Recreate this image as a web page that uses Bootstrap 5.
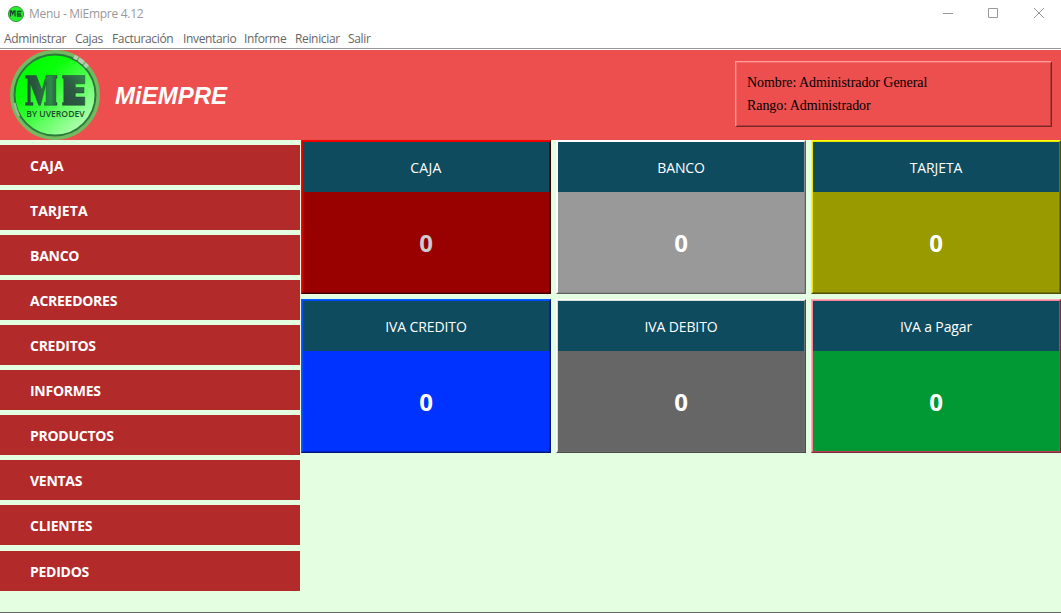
<!DOCTYPE html>
<html lang="es">
<head>
<meta charset="utf-8">
<title>Menu - MiEmpre 4.12</title>
<link href="https://cdn.jsdelivr.net/npm/bootstrap@5.3.0/dist/css/bootstrap.min.css" rel="stylesheet">
<style>
body{width:1061px;height:613px;overflow:hidden;background:#e3fee0;font-family:"Open Sans","Noto Sans",sans-serif}
.titlebar{height:28px;padding-left:8px;background:#fff;color:#999;font-size:12px}
.titlebar .caption{margin-left:5px;letter-spacing:-.29px}
.wmenu{height:20px;padding-left:4px;background:#fff;color:#666;font-size:12px;line-height:21px;white-space:nowrap}
.wmenu span{letter-spacing:-.35px}
.rule{height:2px;background:#fff;border-top:1px solid #999}
.hero{height:90px;background:#ed4f4e;padding:0 9px 0 10px}
.brand{font:italic bold 24px "Liberation Sans",Arial,sans-serif;color:#fff;margin:2px 0 0 15px}
.who{width:317px;height:66px;margin-bottom:2px;padding:9px 11px;border:1px solid;border-color:#ff9a98 #762727 #762727 #ff9a98;box-shadow:inset 1px 1px #f26b69,inset -1px -1px #b63c3c;font:14px/23px "Liberation Serif","Times New Roman",serif;letter-spacing:-.06px;color:#000}
.side{width:300px;padding-top:5px;gap:5px}
.side a{height:40px;padding-left:30px;background:#b32a2b;color:#fff;font-weight:700;font-size:14px;letter-spacing:-.27px;line-height:41px;text-decoration:none}
.side a:last-child{margin-top:1px}
.tiles{display:grid;grid-template-columns:repeat(3,250px);grid-auto-rows:154px;gap:5px;margin-left:1px;align-content:start}
.tile{border:1px solid;border-color:var(--a) var(--d) var(--d) var(--a);color:#fff;text-align:center}
.tile>div{height:152px;border:1px solid;border-color:var(--b) var(--c) var(--c) var(--b);background:var(--bg)}
.tile .cap{height:50px;line-height:52px;background:#0e4b5f;font-size:14px;letter-spacing:-.12px}
.tile .num{height:100px;line-height:102px;font-size:24px;font-weight:700}
.foot{height:1px;background:#666}
</style>
</head>
<body class="d-flex flex-column">
<header class="titlebar d-flex align-items-center">
  <svg width="16" height="16" viewBox="0 0 16 16"><circle cx="8" cy="8" r="7.6" fill="#26f02e" stroke="#348a3a" stroke-width=".9"/><path d="M2.500 10.500V5h1l1.200 3L6 5h1v5.500M13.500 5.500h-4v4.500h4M10 8h3" fill="none" stroke="#174b27" stroke-width="1.300"/></svg>
  <span class="caption">Menu - MiEmpre 4.12</span>
  <svg class="ms-auto" width="119" height="28" viewBox="0 0 119 28" fill="none" stroke="#999"><path d="M1 13.500h10M46.500 8.500h9v9h-9zM92 8l10 10M102 8L92 18"/></svg>
</header>
<nav class="wmenu d-flex">
  <span style="width:71px">Administrar</span><span style="width:37px">Cajas</span><span style="width:71px">Facturación</span><span style="width:61px">Inventario</span><span style="width:51px">Informe</span><span style="width:53px">Reiniciar</span><span>Salir</span>
</nav>
<div class="rule"></div>
<section class="hero d-flex align-items-center">
  <svg width="90" height="90" viewBox="0 0 90 90">
    <defs>
      <linearGradient id="disc" x1=".15" y1=".2" x2=".8" y2=".9"><stop offset="0" stop-color="#0f0"/><stop offset=".25" stop-color="#0cff0c"/><stop offset="1" stop-color="#b4ffb4"/></linearGradient>
      <linearGradient id="ink" x1="0" y1="0" x2="1" y2="0"><stop offset="0" stop-color="#2c4a3c"/><stop offset=".3" stop-color="#2b5540"/><stop offset=".8" stop-color="#2f8a4b"/><stop offset="1" stop-color="#2a5b3e"/></linearGradient>
      <linearGradient id="inkE" x1="0" y1="1" x2="1" y2="0"><stop offset="0" stop-color="#2b4c3c"/><stop offset=".5" stop-color="#2d5a42"/><stop offset="1" stop-color="#2f8a4b"/></linearGradient>
    </defs>
    <circle cx="45" cy="45" r="43" fill="url(#disc)" stroke="#72b95f" stroke-width="3.800"/>
    <circle cx="45" cy="45" r="40.500" fill="none" stroke="#2b7a3c" stroke-width="2"/>
    <path d="M64 6.500A43 43 0 0 1 77.500 17" fill="none" stroke="#bccbb8" stroke-width="4" stroke-dasharray="4 1.500 6 1.500"/>
    <path d="M4.500 53A41 41 0 0 0 9 66" fill="none" stroke="#9dbb98" stroke-width="2.200"/>
    <g stroke="#1d4a30" stroke-width=".5">
      <path fill="url(#ink)" d="M15.500 25.500h10.800l5.700 15 4-15h11v2.800h-1.200v24.200h1.200v2.800H34.500v-2.800h1.700V32.500L30.500 55.300h-1.700L20.300 33v19.500h2.700v2.800h-7.500v-2.800h2.300v-24.200h-2.300z"/>
      <path fill="url(#inkE)" d="M52.500 25.500h22.300v8.300h-9.500v3.700h8.700v5.500h-8.700v4h9.500v8.300H52.500v-2.800h1.300v-24.200h-1.300z"/>
    </g>
    <text x="16.200" y="66.500" textLength="58.500" lengthAdjust="spacingAndGlyphs" font-family="Open Sans, sans-serif" font-weight="600" font-size="9.500" fill="#1d4d2c">BY UVERODEV</text>
  </svg>
  <div class="brand">MiEMPRE</div>
  <div class="who ms-auto"><div>Nombre: Administrador General</div><div>Rango: Administrador</div></div>
</section>
<main class="d-flex flex-grow-1">
  <nav class="side d-flex flex-column">
    <a href="#" style="letter-spacing:.3px">CAJA</a><a href="#" style="letter-spacing:.05px">TARJETA</a><a href="#">BANCO</a><a href="#">ACREEDORES</a><a href="#">CREDITOS</a><a href="#">INFORMES</a><a href="#">PRODUCTOS</a><a href="#">VENTAS</a><a href="#">CLIENTES</a><a href="#">PEDIDOS</a>
  </nav>
  <section class="tiles">
    <div class="tile" style="--bg:#990000;--a:#f00;--b:#e50000;--c:#730000;--d:#3d0000"><div><div class="cap" style="letter-spacing:.3px">CAJA</div><div class="num" style="color:#ccc">0</div></div></div>
    <div class="tile" style="--bg:#999;--a:#fff;--b:#fff;--c:#8a8a8a;--d:#606060"><div><div class="cap">BANCO</div><div class="num">0</div></div></div>
    <div class="tile" style="--bg:#990;--a:#ff0;--b:#e5e500;--c:#737300;--d:#4d4d00"><div><div class="cap">TARJETA</div><div class="num">0</div></div></div>
    <div class="tile" style="--bg:#03f;--a:#0060ff;--b:#0050ff;--c:#0026bf;--d:#00147a"><div><div class="cap">IVA CREDITO</div><div class="num">0</div></div></div>
    <div class="tile" style="--bg:#666;--a:#fff;--b:#dcdcdc;--c:#6e6e6e;--d:#4a4a4a"><div><div class="cap">IVA DEBITO</div><div class="num">0</div></div></div>
    <div class="tile" style="--bg:#093;--a:#ffb0bc;--b:#ff8495;--c:#b04454;--d:#7c2c38"><div><div class="cap">IVA a Pagar</div><div class="num">0</div></div></div>
  </section>
</main>
<div class="foot"></div>
<script src="https://cdn.jsdelivr.net/npm/bootstrap@5.3.0/dist/js/bootstrap.bundle.min.js"></script>
</body>
</html>
